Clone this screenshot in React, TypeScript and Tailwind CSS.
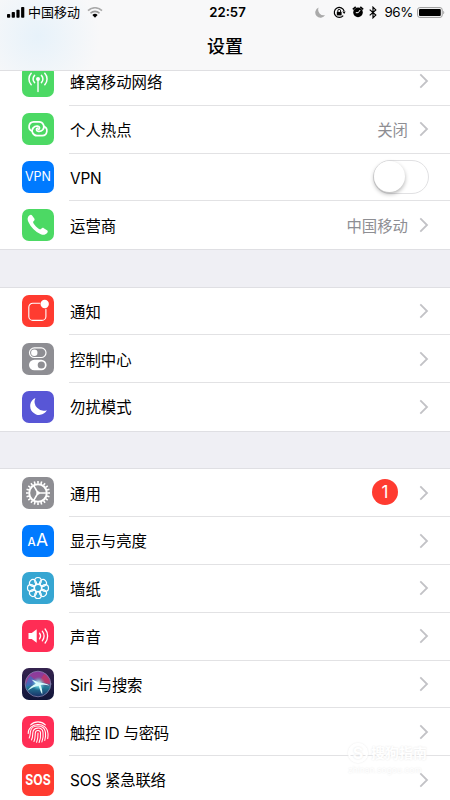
import type { ReactNode } from 'react';

interface RowProps {
    icon: ReactNode;
    label: string;
    value?: string;
    badge?: number;
    toggle?: boolean;
    last?: boolean;
}

const Chevron = () => (
    <svg className="ml-[11px] h-[16px] w-[10px]" viewBox="0 0 10 16" fill="none" stroke="#c2c2c6" strokeWidth="1.8">
        <path d="M1.3 1.4 8 8l-6.7 6.6" />
    </svg>
);

const Tile = ({ color, children }: { color: string; children?: ReactNode }) => (
    <svg className="h-[32px] w-[32px]" viewBox="0 0 32 32" fill="none" stroke="#fff" strokeLinecap="round">
        <rect width="32" height="32" rx="7" fill={color} stroke="none" />
        {children}
    </svg>
);

const CellularIcon = () => (
    <Tile color="#4cd964">
        <circle cx="16" cy="14" r="2" fill="#fff" stroke="none" />
        <path d="M16 15v11.500" strokeWidth="1.4" />
        <path d="M12.6 10.400a5 5 0 0 0 0 7.2M19.4 10.400a5 5 0 0 1 0 7.2M9.2 8.200a8.6 8.6 0 0 0 0 11.6M22.8 8.200a8.6 8.6 0 0 1 0 11.6" strokeWidth="1.5" />
    </Tile>
);

const HotspotIcon = () => (
    <Tile color="#4cd964">
        <g strokeWidth="1.7">
            <path d="M10.300 18.300a4.900 4.900 0 0 1 1.400-9.500h5.200a4.850 4.850 0 0 1 3.900 7.900 5 5 0 0 1-4.400 1.700c-2.400-.3-2.600-2.900-.6-3.200" />
            <path d="M21.700 13.300a4.800 4.800 0 0 1-1.400 9.300h-5.200a4.750 4.750 0 0 1-3.900-7.700 5 5 0 0 1 4.400-1.700c2.400.3 2.600 2.900.6 3.200" />
        </g>
    </Tile>
);

const VpnIcon = () => (
    <Tile color="#007aff">
        <text x="16" y="20.4" textAnchor="middle" fontSize="12.8" fill="#fff" stroke="none" textLength="26" lengthAdjust="spacingAndGlyphs">VPN</text>
    </Tile>
);

const PhoneIcon = () => (
    <Tile color="#4cd964">
        <path
            d="M7.2 6.6c.9-1 2.2-1.2 2.9-.2l2.2 3.2c.6.9.3 1.8-.5 2.5-.9.7-.8 1.4-.2 2.3 1.4 2.3 3.1 4 5.4 5.5.9.6 1.6.6 2.3-.2.8-.9 1.6-1.1 2.5-.5l3.2 2.1c1 .7 1 1.8.1 2.8-1.7 1.9-3.800 2.200-6.300 1.100C12.900 22.700 8.900 18.400 6.300 12.800c-1.100-2.500-.9-4.500.9-6.200z"
            fill="#fff"
            stroke="none"
        />
    </Tile>
);

const NotificationIcon = () => (
    <Tile color="#ff3b30">
        <path d="M17.8 8.300h-7a4 4 0 0 0-4 4v9.100a4 4 0 0 0 4 4h9.100a4 4 0 0 0 4-4v-7" strokeWidth="1.1" />
        <circle cx="22.7" cy="9" r="4.2" fill="#fff" stroke="none" />
    </Tile>
);

const ControlIcon = () => (
    <Tile color="#8e8e93">
        <rect x="7.5" y="4.900" width="16.5" height="9.600" rx="4.800" strokeWidth="1.2" />
        <circle cx="12.3" cy="9.700" r="3.200" fill="#fff" stroke="none" />
        <rect x="7" y="16.700" width="17.6" height="10.600" rx="5.300" fill="#fff" stroke="none" />
        <circle cx="19.3" cy="22" r="3.600" fill="#8e8e93" stroke="none" />
    </Tile>
);

const MoonIcon = () => (
    <Tile color="#5856d6">
        <path d="M13.4 6.900a8.900 8.900 0 1 0 11.500 12.300A9.200 9.200 0 0 1 13.4 6.900z" fill="#fff" stroke="none" />
    </Tile>
);

const GearIcon = () => (
    <Tile color="#8e8e93">
        <circle cx="16" cy="16" r="8.800" strokeWidth="2" />
        {Array.from({ length: 20 }, (_, i) => (
            <path key={i} d="M16 6.500V4" strokeWidth="1.600" strokeLinecap="butt" transform={`rotate(${i * 18} 16 16)`} />
        ))}
        <path d="M16 16h8.300M16 16l-4.300-7.400M16 16l-4.300 7.400" strokeWidth="1.600" />
        <circle cx="16" cy="16" r="1.800" fill="#fff" stroke="none" />
    </Tile>
);

const DisplayIcon = () => (
    <Tile color="#007aff">
        <g fill="#fff" stroke="none">
            <text x="5.400" y="20.800" fontSize="11.500" fontWeight="500">A</text>
            <text x="14" y="20.800" fontSize="17.500">A</text>
        </g>
    </Tile>
);

const WallpaperIcon = () => (
    <Tile color="#36a6d2">
        {Array.from({ length: 8 }, (_, i) => (
            <circle key={i} cx="16" cy="8.800" r="3.300" strokeWidth="1.200" transform={`rotate(${i * 45} 16 16)`} />
        ))}
        <circle cx="16" cy="16" r="3.500" strokeWidth="1.200" />
    </Tile>
);

const SoundIcon = () => (
    <Tile color="#ff2d55">
        <path d="M6.500 13h3.200l5-3.700v13.400l-5-3.700H6.500z" fill="#fff" stroke="none" />
        <path d="M17.500 13.200a4.600 4.600 0 0 1 0 5.600M20.300 11.200a8 8 0 0 1 0 9.600M23.100 9a11 11 0 0 1 0 14" strokeWidth="1.300" />
    </Tile>
);

const SiriIcon = () => (
    <Tile color="url(#siriBg)">
        <defs>
            <linearGradient id="siriBg" x1="0" y1="0" x2="0" y2="1">
                <stop offset="0" stopColor="#35234f" />
                <stop offset="1" stopColor="#10163a" />
            </linearGradient>
            <linearGradient id="siriOrb" x1=".5" y1="0" x2=".5" y2="1">
                <stop offset="0" stopColor="#8b3aa0" />
                <stop offset=".4" stopColor="#94408f" />
                <stop offset=".62" stopColor="#237a96" />
                <stop offset="1" stopColor="#182f66" />
            </linearGradient>
            <radialGradient id="siriGlow">
                <stop offset="0" stopColor="#fff" />
                <stop offset=".4" stopColor="#8ff3f5" stopOpacity=".7" />
                <stop offset="1" stopColor="#35b9d6" stopOpacity="0" />
            </radialGradient>
        </defs>
        <circle cx="16" cy="16" r="12.800" fill="url(#siriOrb)" stroke="#8f8ab4" strokeWidth=".7" />
        <path d="M16 14.500 4.500 19C4 15 5.500 10.500 8.500 8z" fill="#2b75cf" fillOpacity=".6" stroke="none" />
        <path d="M17 14 22 6c4 2 6 6 6 10z" fill="#c9365f" fillOpacity=".7" stroke="none" />
        <circle cx="16.500" cy="15.800" r="7" fill="url(#siriGlow)" stroke="none" />
        <path
            d="M9.500 11.500c3 .8 5.200 1.900 7 3.400 3.200-.5 7.500.2 11 2.600-3.700-.9-6.500-1-8.900-.4 1.300 2.900 1.900 6 1.700 9.400-1.600-2.700-2.700-5.600-3.600-8.700-3.800.6-7.700 2.300-11.200 5 2.300-3.500 5.200-5.800 8.400-7.100z"
            fill="#d9fcfb"
            stroke="none"
        />
    </Tile>
);

const TouchIdIcon = () => (
    <Tile color="#ff2d55">
        <g strokeWidth="1.050">
            <path d="M8.700 8.900a10.300 10.300 0 0 1 14.600 0" />
            <path d="M6.200 17.500c-.5-10.800 19-13 19.800.2.100 1.800 0 3.400-.3 4.900" />
            <path d="M7.200 22c1.200-2.200.9-4.200 1.200-6.300 1-7.200 13.300-8 15 .3.500 2.900.2 5.600-.6 8.400" />
            <path d="M9.500 23.900c1.400-2.500 1.100-4.800 1.300-7.200.5-5.700 9.200-6.400 10.200-.4.500 3.400.1 6.400-1.100 9.600" />
            <path d="M11.900 25.400c1.500-2.900 1.200-5.900 1.400-8.400.3-3.300 4.900-3.400 5.200-.2.300 3.500-.1 6.600-1.400 9.700" />
            <path d="M14.600 26.200c1.400-3.100 1.500-6 1.400-9.200" />
        </g>
    </Tile>
);

const SosIcon = () => (
    <Tile color="#ff3b30">
        <text x="16" y="21.100" textAnchor="middle" fontSize="14.200" fontWeight="700" fill="#fff" stroke="none" textLength="25.500" lengthAdjust="spacingAndGlyphs">SOS</text>
    </Tile>
);

const Row = ({ icon, label, value, badge, toggle, last }: RowProps) => (
    <div className="flex h-[47.8px] items-center pl-[22px]">
        <div className="mb-px shrink-0">{icon}</div>
        <div className={`ml-[15px] flex h-full flex-1 items-center border-b pr-[21px] pl-px ${last ? 'border-transparent' : 'border-[#e2e2e4]'}`}>
            <span className={`flex-1 pt-[3px] text-[15.4px] text-black ${/[A-Z]/.test(label) ? 'tracking-[-0.2px]' : ''}`}>{label}</span>
            {value && <span className="pt-[3px] text-[15.4px] text-[#8e8e93]">{value}</span>}
            {badge && (
                <span className="mr-[10px] mb-px flex h-[26px] w-[26px] items-center justify-center rounded-full bg-[#ff3b30] text-[17px] text-white">{badge}</span>
            )}
            {toggle ? (
                <div className="h-[34px] w-[56px] rounded-full border-[1.5px] border-[#e1e1e3]">
                    <div className="h-[31px] w-[31px] rounded-full bg-white shadow-[0_2px_4px_rgba(0,0,0,0.3)]" />
                </div>
            ) : (
                <Chevron />
            )}
        </div>
    </div>
);

const Gap = () => <div className="h-[38.4px] border-y border-[#dfdfe3] bg-[#efeff4]" />;

const StatusBar = () => (
    <div className="grid h-6 grid-cols-3 items-center text-[13px] text-black">
        <div className="flex items-center pl-[7px]">
            <svg className="h-[11px] w-[18px]" viewBox="0 0 18 11">
                <rect x="0" y="7" width="3.2" height="3.8" rx=".8" />
                <rect x="4.7" y="5" width="3.2" height="5.8" rx=".8" />
                <rect x="9.4" y="2.8" width="3.2" height="8" rx=".8" />
                <rect x="14.1" y="0" width="3.2" height="10.8" rx=".8" />
            </svg>
            <span className="ml-[3px]">中国移动</span>
            <svg className="ml-[7px] h-[11px] w-[16px]" viewBox="0 0 16 11" fill="none" strokeWidth="1.6">
                <path d="M1 3.600a10 10 0 0 1 14 0" stroke="#aaa" />
                <path d="M3.500 6.200a6.400 6.400 0 0 1 9 0" stroke="#999" />
                <path d="M5.400 8a3.800 3.800 0 0 1 5.200 0L8 10.700z" fill="#000" />
            </svg>
        </div>
        <div className="pt-px pl-[5px] text-center text-[13.2px] font-semibold">22:57</div>
        <div className="flex items-center justify-end pr-[5px]">
            <svg className="mr-[7px] h-[11px] w-[11px]" viewBox="0 0 11 11" fill="#aaa">
                <path d="M3.600.6a5.300 5.300 0 1 0 6.600 7.500A5.600 5.600 0 0 1 3.600.6z" />
            </svg>
            <svg className="mr-[6px] h-[13px] w-[13px]" viewBox="0 0 13 13" fill="none" stroke="#000">
                <path d="M10.200 9.600A5 5 0 1 1 11.100 5" strokeWidth="1.2" />
                <path d="m9.300 5.500 3.300.1-1.400 2.300z" fill="#000" stroke="none" />
                <rect x="3.800" y="5.900" width="4.800" height="3.500" fill="#000" stroke="none" />
                <path d="M4.800 6V4.800a1.400 1.400 0 0 1 2.800 0V6" />
            </svg>
            <svg className="mr-[5px] h-[12px] w-[12px]" viewBox="0 0 12 12">
                <circle cx="6" cy="6.400" r="4.800" />
                <path d="M.8 3.300 3.700.9M11.200 3.300 8.300.9" stroke="#000" strokeWidth="1.500" />
                <path d="M6.100 6.800 8.200 4M6.100 6.700H3.800" stroke="#fff" strokeWidth="1" />
            </svg>
            <svg className="mr-[7px] h-[13px] w-[8px]" viewBox="0 0 8 13" fill="none" stroke="#000" strokeWidth="1.2">
                <path d="m.7 3.600 6.100 5.500L4 11.800V1.200l2.800 2.700L.7 9.400" />
            </svg>
            <span className="pt-px text-[13.4px] tracking-[-0.4px]">96%</span>
            <svg className="ml-[4px] h-[11px] w-[28px]" viewBox="0 0 28 11">
                <rect x=".6" y=".6" width="24.6" height="9.8" rx="2.2" fill="none" stroke="#999" />
                <rect x="2" y="2" width="21.8" height="7" rx="1" />
                <path d="M26.300 3.700v3.600c1.300-.5 1.300-3.100 0-3.600z" fill="#999" />
            </svg>
        </div>
    </div>
);

export default function App() {
    return (
        <div className="relative h-[800px] w-[450px] overflow-hidden bg-white font-['Inter','Noto_Sans_CJK_SC',sans-serif] leading-none">
            <header className="relative z-10 h-[71px] border-b border-[#dfdfe2] bg-[#f8f8f9] bg-[radial-gradient(circle_at_38px_36px,#e7f2fa_0px,#f8f8f9_62px)]">
                <StatusBar />
                <h1 className="pt-[14px] text-center text-[18px] leading-[18px] font-medium text-black">设置</h1>
            </header>

            <main className="-mt-[13px]">
                <Row icon={<CellularIcon />} label="蜂窝移动网络" />
                <Row icon={<HotspotIcon />} label="个人热点" value="关闭" />
                <Row icon={<VpnIcon />} label="VPN" toggle />
                <Row icon={<PhoneIcon />} label="运营商" value="中国移动" last />
                <Gap />
                <Row icon={<NotificationIcon />} label="通知" />
                <Row icon={<ControlIcon />} label="控制中心" />
                <Row icon={<MoonIcon />} label="勿扰模式" last />
                <Gap />
                <Row icon={<GearIcon />} label="通用" badge={1} />
                <Row icon={<DisplayIcon />} label="显示与亮度" />
                <Row icon={<WallpaperIcon />} label="墙纸" />
                <Row icon={<SoundIcon />} label="声音" />
                <Row icon={<SiriIcon />} label="Siri 与搜索" />
                <Row icon={<TouchIdIcon />} label="触控 ID 与密码" />
                <Row icon={<SosIcon />} label="SOS 紧急联络" last />
            </main>

            {/* watermark */}
            <div className="absolute top-[743px] left-[348px] text-white [text-shadow:0_0_2px_#e4e4e4]">
                <div className="flex items-center gap-[3px]">
                    <span className="flex h-[20px] w-[20px] items-center justify-center rounded-full border-2 border-white text-[16px] font-bold shadow-[0_0_2px_#e4e4e4]">S</span>
                    <span className="text-[14px] font-bold">搜狗指南</span>
                </div>
                <div className="mt-[3px] text-[8.5px]">zhinan.sogou.com</div>
            </div>
        </div>
    );
}
